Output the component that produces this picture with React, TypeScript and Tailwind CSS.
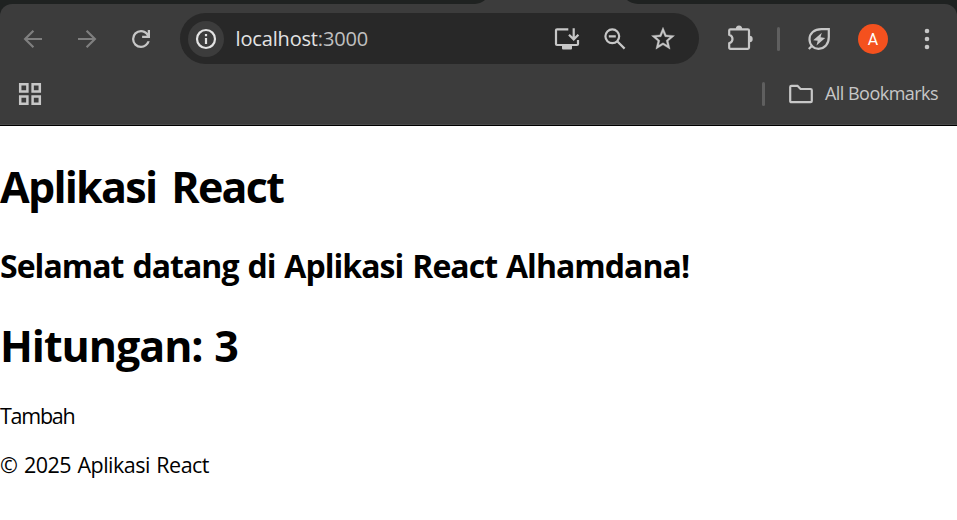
import type { ReactNode } from "react";

function Icon({ children, className = "" }: { children: ReactNode; className?: string }) {
  return (
    <svg
      width="26"
      height="26"
      viewBox="0 0 26 26"
      fill="none"
      stroke="currentColor"
      strokeWidth="2.2"
      className={`block shrink-0 overflow-visible ${className}`}
    >
      {children}
    </svg>
  );
}

function TabStrip() {
  return (
    <div className="flex h-1 justify-between">
      <svg width="485" height="4" className="block" fill="#1f2221">
        <path d="M0 0H485Q481 3.6 475 4H0Z" />
      </svg>
      <svg width="330" height="4" className="block" fill="#1f2221">
        <path d="M0 0H330V4H11Q4 3.6 0 0Z" />
      </svg>
    </div>
  );
}

function AddressBar() {
  return (
    <div className="mb-px flex h-[51px] w-[519px] shrink-0 items-center rounded-full bg-[#282828] pt-px pl-[7.5px] pr-[23px]">
      <div className="flex size-9 items-center justify-center rounded-full bg-[#3c3c3c] text-[#e3e3e3]">
        <Icon>
          <circle cx="13" cy="13" r="9" />
          <path d="M13 12V18M13 8V10.2" />
        </Icon>
      </div>
      <div className="ml-3 flex-1 whitespace-nowrap text-[20px] leading-[26px] tracking-[-0.16px] text-[#e3e3e3]">
        localhost<span className="text-[#c0c0c0]">:3000</span>
      </div>
      <div className="flex gap-[22px] text-[#c7c7c7]">
        <Icon>
          <path d="M14.3 3.3H3Q2 3.3 2 4.3V18Q2 19 3 19H23Q24 19 24 18V14" />
          <path d="M19.7 2.3V13M15 8.7L19.7 13.4L24.4 8.7" />
          <path d="M8 19H18V22.5Q18 23.5 17 23.5H9Q8 23.5 8 22.5Z" fill="currentColor" stroke="none" />
        </Icon>
        <Icon>
          <circle cx="10.3" cy="10.3" r="6.9" />
          <path d="M6.8 10.3H13.8M15.2 15.2L22.6 22.6" />
        </Icon>
        <Icon>
          <path
            transform="translate(-0.8 -1) scale(1.15)"
            fill="currentColor"
            strokeWidth="0.3"
            d="M22 9.24l-7.19-.62L12 2 9.19 8.63 2 9.24l5.46 4.73L5.82 21 12 17.27 18.18 21l-1.63-7.03L22 9.24zM12 15.4l-3.76 2.27 1-4.28-3.32-2.88 4.38-.38L12 6.1l1.71 4.04 4.38.38-3.32 2.88 1 4.28L12 15.4z"
          />
        </Icon>
      </div>
    </div>
  );
}

function Toolbar() {
  return (
    <div className="flex h-[70px] items-center pl-5 text-[#c7c7c7]">
      <Icon className="text-[#7f7f7f]">
        <path d="M22 13H5.5M13.4 4.7L5.1 13L13.4 21.3" />
      </Icon>
      <Icon className="ml-7 text-[#7f7f7f]">
        <path d="M4 13H20.5M12.6 4.7L20.9 13L12.6 21.3" />
      </Icon>
      <Icon className="ml-7 mr-[26px]">
        <path
          transform="translate(-0.5 -0.5) scale(1.125)"
          fill="currentColor"
          stroke="none"
          d="M12 20q-3.35 0-5.675-2.325Q4 15.35 4 12q0-3.35 2.325-5.675Q8.65 4 12 4q1.725 0 3.3.713 1.575.712 2.7 2.037V4h2v7h-7V9h4.2q-.8-1.4-2.188-2.2Q13.625 6 12 6 9.5 6 7.75 7.75T6 12q0 2.5 1.75 4.25T12 18q1.925 0 3.475-1.1T17.65 14h2.1q-.7 2.65-2.85 4.325Q14.75 20 12 20z"
        />
      </Icon>
      <AddressBar />
      <Icon className="ml-7">
        <path d="M2.2 8.8V4.5Q2.2 3.3 3.4 3.3H20.8Q22 3.3 22 4.5V21.6Q22 22.8 20.8 22.8H3.4Q2.2 22.8 2.2 21.6V17.3Q5.5 16.2 5.5 13T2.2 8.8Z" />
        <path d="M8.8 3A3.2 3.6 0 0 1 15.2 3ZM22.5 9.8A3.2 3.2 0 0 1 22.5 16.2Z" fill="currentColor" stroke="none" />
      </Icon>
      <div className="ml-6 h-6 w-[3px] rounded-full bg-[#5f5f5f]" />
      <Icon className="ml-[26px]">
        <path d="M22.8 3.2H15.5C8 3.2 3.5 7.3 3.5 13.3C3.5 19 7.5 22.8 12.5 22.8C18.7 22.8 22.8 18.2 22.8 11Z" />
        <path d="M6.6 19.2L2.8 23" />
        <path d="M15.8 6.8L7.2 14.2L11.7 14.8L10.5 19.5L19.2 12L14.5 11.3Z" fill="currentColor" stroke="none" />
      </Icon>
      <div className="ml-[26px] flex size-[30px] items-center justify-center rounded-full bg-[#f4511e] pt-px font-['Roboto',sans-serif] text-[16px] leading-none text-white">
        A
      </div>
      <Icon className="ml-[26px]">
        <g fill="currentColor" stroke="none">
          <circle cx="13" cy="5" r="2.3" />
          <circle cx="13" cy="13" r="2.3" />
          <circle cx="13" cy="21" r="2.3" />
        </g>
      </Icon>
    </div>
  );
}

function BookmarksBar() {
  return (
    <div className="flex h-10 items-center pl-[17px] text-[#c7c7c7]">
      <Icon>
        <path d="M3.2 3.2H10.4V10.4H3.2ZM15.6 3.2H22.8V10.4H15.6ZM3.2 15.6H10.4V22.8H3.2ZM15.6 15.6H22.8V22.8H15.6Z" strokeWidth="2.5" />
      </Icon>
      <div className="ml-[719px] h-6 w-[3px] rounded-full bg-[#5f5f5f]" />
      <Icon className="ml-[23px]">
        <path d="M3.4 4.8H9.5L12.5 8H22.6Q23.8 8 23.8 9.2V20Q23.8 21.2 22.6 21.2H3.4Q2.2 21.2 2.2 20V6Q2.2 4.8 3.4 4.8Z" />
      </Icon>
      <span className="mb-0.5 ml-[11px] whitespace-nowrap text-[18px] leading-6 tracking-[-0.53px]">All Bookmarks</span>
    </div>
  );
}

export default function App() {
  return (
    <div className="h-[520px] w-[957px] overflow-hidden bg-white font-['Open_Sans','Noto_Sans',sans-serif] text-black">
      <header className="h-[126px] border-b border-black bg-[#3c3c3c]">
        <TabStrip />
        <div className="bg-[#1f2221]">
          <div className="h-[121px] rounded-t-[12px] border-b border-[#4a4a4a] bg-[#3c3c3c]">
            <Toolbar />
            <BookmarksBar />
          </div>
        </div>
      </header>
      <main className="whitespace-nowrap">
        <h1 className="pt-8 text-[43px] font-bold leading-[58px] tracking-[-1.75px] [word-spacing:5.6px]">Aplikasi React</h1>
        <h2 className="mt-7 text-[32px] font-bold leading-[44px] tracking-[-0.96px] [word-spacing:1.5px]">Selamat datang di Aplikasi React Alhamdana!</h2>
        <h1 className="mt-[29px] text-[43px] font-bold leading-[58px] tracking-[-1.05px] [word-spacing:1.5px]">Hitungan: 3</h1>
        <p className="mt-[27px] text-[21.5px] leading-[28px] tracking-[-1.25px]">Tambah</p>
        <p className="mt-[21px] text-[21.5px] leading-[28px] tracking-[-0.53px] [word-spacing:1.5px]">© 2025 Aplikasi React</p>
      </main>
    </div>
  );
}
